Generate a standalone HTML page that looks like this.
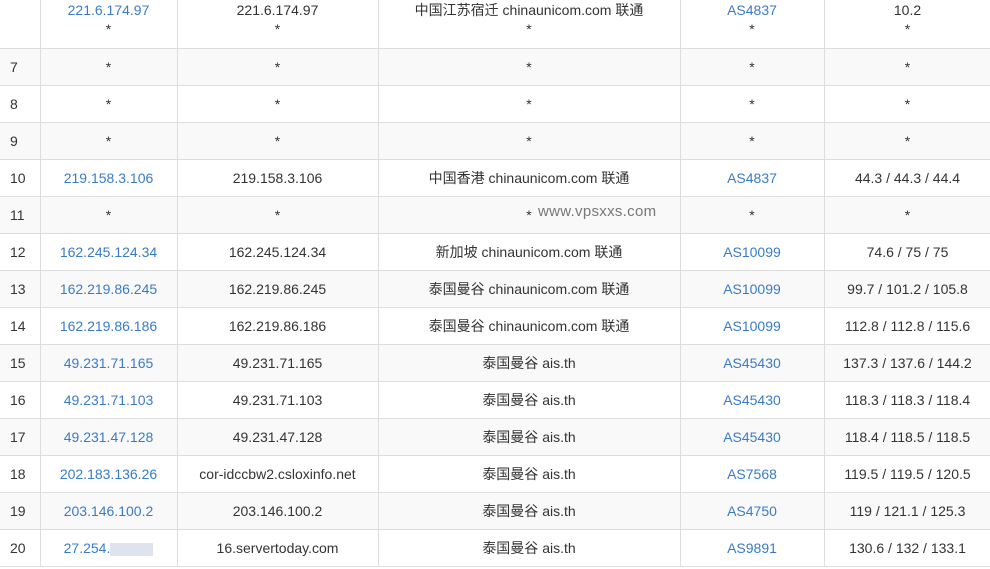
<!DOCTYPE html>
<html><head><meta charset="utf-8"><style>
body{margin:0;width:990px;height:569px;overflow:hidden;background:#fff;font-family:"Liberation Sans","Noto Sans CJK SC",sans-serif;font-size:14px;color:#333}
table{border-collapse:collapse;table-layout:fixed;position:absolute;left:0;top:0;width:991px}
td{border:1px solid #ddd;text-align:center;height:36px;padding:0;line-height:16px}
td:first-child{text-align:left;padding-left:10px;border-left:none}
tr.g td{background:#f9f9f9}
.b{color:#3a7bc8}
tr.h td{height:47px;border-top:none;vertical-align:top;padding-top:1px;line-height:19px}
.wm{position:absolute;left:538px;top:203px;color:#777;font-size:15px;letter-spacing:.3px}
.blur{display:inline-block;width:43px;height:13px;background:#dde4ee;vertical-align:middle}
</style></head><body>
<table>
<colgroup><col style="width:40px"><col style="width:137px"><col style="width:201px"><col style="width:302px"><col style="width:144px"><col style="width:167px"></colgroup>
<tr class="h"><td></td><td><span class="b">221.6.174.97</span><br>*</td><td>221.6.174.97<br>*</td><td>中国江苏宿迁 chinaunicom.com 联通<br>*</td><td><span class="b">AS4837</span><br>*</td><td>10.2<br>*</td></tr>
<tr class="g"><td>7</td><td>*</td><td>*</td><td>*</td><td>*</td><td>*</td></tr>
<tr><td>8</td><td>*</td><td>*</td><td>*</td><td>*</td><td>*</td></tr>
<tr class="g"><td>9</td><td>*</td><td>*</td><td>*</td><td>*</td><td>*</td></tr>
<tr><td>10</td><td class="b">219.158.3.106</td><td>219.158.3.106</td><td>中国香港 chinaunicom.com 联通</td><td class="b">AS4837</td><td>44.3 / 44.3 / 44.4</td></tr>
<tr class="g"><td>11</td><td>*</td><td>*</td><td>*</td><td>*</td><td>*</td></tr>
<tr><td>12</td><td class="b">162.245.124.34</td><td>162.245.124.34</td><td>新加坡 chinaunicom.com 联通</td><td class="b">AS10099</td><td>74.6 / 75 / 75</td></tr>
<tr class="g"><td>13</td><td class="b">162.219.86.245</td><td>162.219.86.245</td><td>泰国曼谷 chinaunicom.com 联通</td><td class="b">AS10099</td><td>99.7 / 101.2 / 105.8</td></tr>
<tr><td>14</td><td class="b">162.219.86.186</td><td>162.219.86.186</td><td>泰国曼谷 chinaunicom.com 联通</td><td class="b">AS10099</td><td>112.8 / 112.8 / 115.6</td></tr>
<tr class="g"><td>15</td><td class="b">49.231.71.165</td><td>49.231.71.165</td><td>泰国曼谷 ais.th</td><td class="b">AS45430</td><td>137.3 / 137.6 / 144.2</td></tr>
<tr><td>16</td><td class="b">49.231.71.103</td><td>49.231.71.103</td><td>泰国曼谷 ais.th</td><td class="b">AS45430</td><td>118.3 / 118.3 / 118.4</td></tr>
<tr class="g"><td>17</td><td class="b">49.231.47.128</td><td>49.231.47.128</td><td>泰国曼谷 ais.th</td><td class="b">AS45430</td><td>118.4 / 118.5 / 118.5</td></tr>
<tr><td>18</td><td class="b">202.183.136.26</td><td>cor-idccbw2.csloxinfo.net</td><td>泰国曼谷 ais.th</td><td class="b">AS7568</td><td>119.5 / 119.5 / 120.5</td></tr>
<tr class="g"><td>19</td><td class="b">203.146.100.2</td><td>203.146.100.2</td><td>泰国曼谷 ais.th</td><td class="b">AS4750</td><td>119 / 121.1 / 125.3</td></tr>
<tr><td>20</td><td class="b">27.254.<span class="blur"></span></td><td>16.servertoday.com</td><td>泰国曼谷 ais.th</td><td class="b">AS9891</td><td>130.6 / 132 / 133.1</td></tr>
</table>
<div class="wm">www.vpsxxs.com</div>
</body></html>
